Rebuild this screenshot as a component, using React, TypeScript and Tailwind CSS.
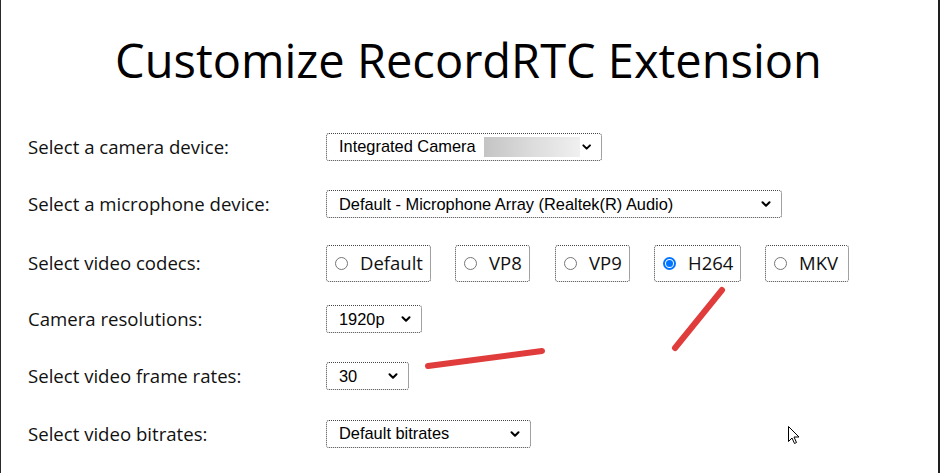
import { ChevronDown } from "lucide-react";

const label = "font-['Open_Sans',sans-serif] text-[18.6px] text-[#111]";
const field = "font-['Liberation_Sans',Arial,sans-serif] text-[16.4px] text-black";

function Select({ text, width, children }: { text: string; width: string; children?: React.ReactNode }) {
  return (
    <div
      className={`${field} ${width} h-[28px] flex items-center pl-[12px] pr-[8px] border border-dotted border-[#444] rounded-[3px] bg-white`}
    >
      <span className="whitespace-nowrap">{text}</span>
      {children}
      <ChevronDown className="ml-auto w-[14px] h-[14px] text-black" strokeWidth={3.5} />
    </div>
  );
}

function Radio({ text, checked, width }: { text: string; checked?: boolean; width: string }) {
  return (
    <div
      className={`${width} h-[37px] flex items-center pl-[8px] border border-dotted border-[#444] rounded-[3px] font-['Open_Sans',sans-serif] text-[18.5px] text-[#111]`}
    >
      {checked ? (
        <span className="w-[13px] h-[13px] rounded-full border-[2px] border-[#0075ff] flex items-center justify-center mr-[12px]">
          <span className="w-[7px] h-[7px] rounded-full bg-[#0075ff]" />
        </span>
      ) : (
        <span className="w-[13px] h-[13px] rounded-full border border-[#767676] mr-[12px]" />
      )}
      <span>{text}</span>
    </div>
  );
}

function Row({ title, children, h }: { title: string; children: React.ReactNode; h: string }) {
  return (
    <div className={`flex items-center ${h}`}>
      <div className={`${label} w-[298px]`}>{title}</div>
      {children}
    </div>
  );
}

export default function App() {
  return (
    <div className="relative w-[940px] h-[473px] bg-white border-l border-l-[#2a2a2a] border-r-2 border-r-[#1e1e1e] overflow-hidden">
      <h1 className="text-center font-['Open_Sans',sans-serif] text-[47px] leading-none text-black pt-[37px] pr-[2px]">
        Customize RecordRTC Extension
      </h1>

      <div className="pl-[27px] pt-[48px] flex flex-col">
        <Row title="Select a camera device:" h="h-[29px]">
          <Select text="Integrated Camera" width="w-[276px]">
            <span className="ml-[8px] w-[101px] h-[20px] bg-gradient-to-r from-[#c4c4c4] via-[#dcdcdc] to-[#f0f0f0]" />
          </Select>
        </Row>
        <div className="h-[28px]" />
        <Row title="Select a microphone device:" h="h-[30px]">
          <Select text="Default - Microphone Array (Realtek(R) Audio)" width="w-[456px]" />
        </Row>
        <div className="h-[25px]" />
        <Row title="Select video codecs:" h="h-[38px]">
          <div className="flex gap-[24px]">
            <Radio text="Default" width="w-[105px]" />
            <Radio text="VP8" width="w-[75px]" />
            <div className="pl-[1px]">
              <Radio text="VP9" width="w-[75px]" />
            </div>
            <Radio text="H264" width="w-[87px]" checked />
            <Radio text="MKV" width="w-[84px]" />
          </div>
        </Row>
        <div className="h-[22px]" />
        <Row title="Camera resolutions:" h="h-[30px]">
          <Select text="1920p" width="w-[96px]" />
        </Row>
        <div className="h-[27px]" />
        <Row title="Select video frame rates:" h="h-[30px]">
          <Select text="30" width="w-[83px]" />
        </Row>
        <div className="h-[27px]" />
        <Row title="Select video bitrates:" h="h-[31px]">
          <Select text="Default bitrates" width="w-[205px]" />
        </Row>
      </div>

      {/* annotation strokes + mouse pointer */}
      <svg className="absolute left-0 top-0 pointer-events-none" width="940" height="473">
        <line x1="427" y1="366" x2="541" y2="351" stroke="#e03c3c" strokeWidth="6" strokeLinecap="round" />
        <line x1="674" y1="348" x2="721" y2="290" stroke="#e03c3c" strokeWidth="6" strokeLinecap="round" />
        <path
          d="M787.5 426.5 L787.5 441.5 L791 438 L793.5 443.5 L795.5 442.5 L793 437 L798 437 Z"
          fill="white"
          stroke="black"
          strokeWidth="1"
        />
      </svg>
    </div>
  );
}
